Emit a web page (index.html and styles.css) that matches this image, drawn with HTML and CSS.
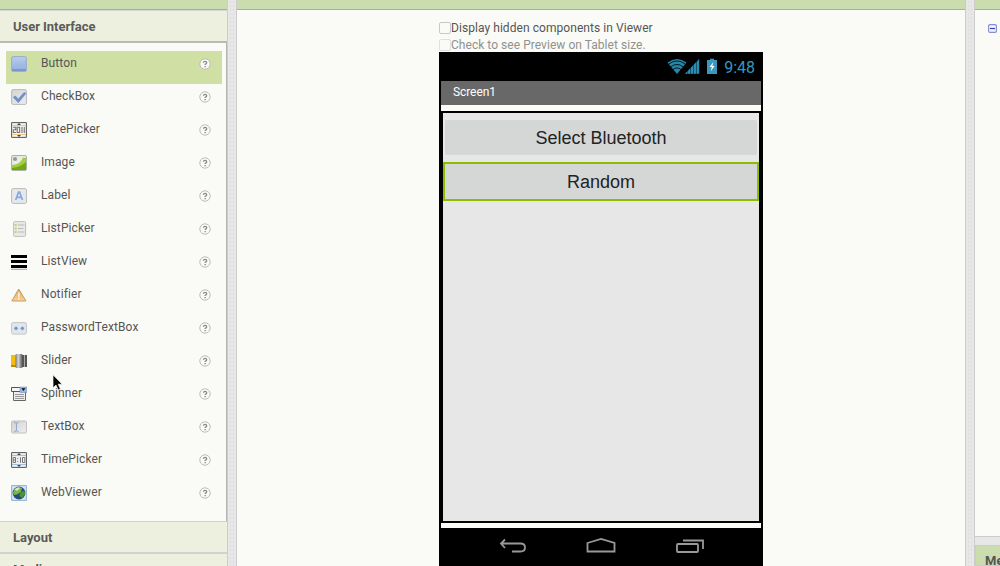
FILE: index.html
```html
<!DOCTYPE html>
<html lang="en">
<head>
<meta charset="utf-8">
<title>Designer</title>
<link rel="stylesheet" href="styles.css">
</head>
<body>
<svg class="defs" width="0" height="0" aria-hidden="true">
  <defs>
    <linearGradient id="blue" x2="0" y2="1"><stop stop-color="#b9cdec"/><stop offset="1" stop-color="#8eaddd"/></linearGradient>
    <linearGradient id="grey" x2="1" y2="1"><stop stop-color="#d3d3d3"/><stop offset="1" stop-color="#eee"/></linearGradient>
    <linearGradient id="amber" x2="0" y2="1"><stop stop-color="#e2a55c"/><stop offset="1" stop-color="#f8d394"/></linearGradient>
    <linearGradient id="metal"><stop stop-color="#777"/><stop offset=".4" stop-color="#d5d5d5"/><stop offset="1" stop-color="#555"/></linearGradient>
    <symbol id="help" viewBox="0 0 12 12"><circle cx="6" cy="6" r="5.2" fill="#fafaf7" stroke="#bcbcb9"/><path d="M4.4 4.8Q4.5 3.3 6.1 3.3T7.7 4.7Q7.7 5.6 6.2 6.4V7" fill="none" stroke="#8a8a8a" stroke-width="1.3"/><path d="M5.5 8h1.4v1.2H5.5z" fill="#8a8a8a"/></symbol>
  </defs>
</svg>
<div class="app">
  <aside class="palette">
    <div class="strip"></div>
    <h2 class="section section-open">User Interface</h2>
    <ul class="items">
      <li class="item selected"><svg class="icon" viewBox="0 0 16 16"><rect x=".6" y=".6" width="14.8" height="14.8" rx="1.5" fill="url(#blue)" stroke="#9badc9"/><path d="M1 11Q9 11 15 4v8H1z" fill="#9db9e3" opacity=".6"/><path d="M1 13h14v2H1z" fill="#7899cf"/></svg><span class="name">Button</span><svg class="help"><use href="#help"/></svg></li>
      <li class="item"><svg class="icon" viewBox="0 0 16 16"><rect x=".6" y=".6" width="14.8" height="14.8" rx="1.5" fill="url(#grey)" stroke="#b9b9b9"/><path d="M2.3 8.2L4.5 7l2.6 3.2L13 3.4l2 .9-7.7 9.4z" fill="#6d93cc" stroke="#597fb9" stroke-width=".5"/></svg><span class="name">CheckBox</span><svg class="help"><use href="#help"/></svg></li>
      <li class="item"><svg class="icon" viewBox="0 0 16 16"><path d="M.6.6h14.8v14.8H.6z" fill="#f3f1ed" stroke="#555"/><path d="M1 3.5h14M1 12.5h14" stroke="#f3c783"/><path d="M6 3l2-2 2 2zM6 13l2 2 2-2z" fill="#444"/><path d="M2 5.3h2.7v2.5H2.3v2.7H5M6.2 5.3h2.4v5.2H6.2zM11 5v6M13.3 5v6" fill="none" stroke="#777" stroke-width="1.1"/></svg><span class="name">DatePicker</span><svg class="help"><use href="#help"/></svg></li>
      <li class="item"><svg class="icon" viewBox="0 0 16 16"><rect x=".6" y=".6" width="14.8" height="14.8" rx="1" fill="#e8eee7" stroke="#a5aaa0"/><circle cx="4" cy="4" r="2.1" fill="#999"/><path d="M1 10Q10 9 12 2.5L15 3v12H1z" fill="#a4cf3c"/><path d="M1 13Q10 12 15 7v8H1z" fill="#71a617"/></svg><span class="name">Image</span><svg class="help"><use href="#help"/></svg></li>
      <li class="item"><svg class="icon" viewBox="0 0 16 16"><rect x=".6" y=".6" width="14.8" height="14.8" rx="1.5" fill="#e6e8ec" stroke="#bbb"/><path d="M4.7 12L7.6 4h1L11.5 12M5.8 9.4h4.6" fill="none" stroke="#85a8dd" stroke-width="1.7"/></svg><span class="name">Label</span><svg class="help"><use href="#help"/></svg></li>
      <li class="item"><svg class="icon" viewBox="0 0 16 16"><rect x="2.6" y=".6" width="12" height="14.8" rx="1" fill="#e9e9e5" stroke="#c0c0bb"/><path d="M7 4h6.5M7 7.5h5.5M7 11h6.5" stroke="#bbb"/><path d="M3.7 3h2v2h-2zM3.7 6.5h2v2h-2zM3.7 10h2v2h-2z" fill="#bdd666"/></svg><span class="name">ListPicker</span><svg class="help"><use href="#help"/></svg></li>
      <li class="item"><svg class="icon" viewBox="0 0 16 16"><path d="M0 1h16v3H0zM0 6h16v3H0zM0 11h16v3H0z" fill="#000"/><path d="M0 15.3h16" stroke="#777" stroke-width=".7"/></svg><span class="name">ListView</span><svg class="help"><use href="#help"/></svg></li>
      <li class="item"><svg class="icon" viewBox="0 0 16 16"><path d="M7.7 2L15 14H.8z" fill="url(#amber)" stroke="#c69c66" stroke-linejoin="round"/><path d="M7.8 5.5v5" stroke="#fff2dc" stroke-width="1.6"/><path d="M7 11.2h1.7V13H7z" fill="#fff2dc"/></svg><span class="name">Notifier</span><svg class="help"><use href="#help"/></svg></li>
      <li class="item"><svg class="icon" viewBox="0 0 16 16"><rect x=".6" y="2.6" width="14.8" height="11.5" rx="1.5" fill="#e2e6ec" stroke="#c3c5c9"/><path d="M3 8.3h4M5 6.3v4M9.4 8.3h4M11.4 6.3v4" stroke="#a8bfe0"/><circle cx="5" cy="8.3" r="1.6" fill="#7095cd"/><circle cx="11.4" cy="8.3" r="1.6" fill="#7095cd"/></svg><span class="name">PasswordTextBox</span><svg class="help"><use href="#help"/></svg></li>
      <li class="item"><svg class="icon" viewBox="0 0 16 16"><path d="M0 2h5v11H0z" fill="#f2bd0c"/><path d="M0 12h5v2H0z" fill="#bd890e"/><path d="M10 2h6v12h-6z" fill="#555"/><path d="M13 2h1v12h-1z" fill="#aaa"/><rect x="4.5" y="1" width="7" height="14" rx="1" fill="url(#metal)"/></svg><span class="name">Slider</span><svg class="help"><use href="#help"/></svg></li>
      <li class="item"><svg class="icon" viewBox="0 0 16 16"><path d="M2.5 5.5h12v9h-12z" fill="#eee" stroke="#666"/><path d="M4 8.5h9M4 10.5h9M4 12.5h9" stroke="#999"/><path d="M.5 1.5h15v4H.5z" fill="#f5f5f5" stroke="#555"/><path d="M9 1h7v5.5H9z" fill="#9ab8e7" stroke="#6886b7" stroke-width=".5"/><path d="M10.3 2.3h4.2l-2.1 2.8z" fill="#111"/></svg><span class="name">Spinner</span><svg class="help"><use href="#help"/></svg></li>
      <li class="item"><svg class="icon" viewBox="0 0 16 16"><rect x=".6" y="2" width="14.8" height="12" rx="1" fill="url(#grey)" stroke="#c0c0c0"/><path d="M3 3.7h1.5q.9 0 .9.9.1-.9 1-.9h1.3M5.4 4.3v7.2M3 12.3h1.5q.9 0 .9-.9.1.9 1 .9h1.3" fill="none" stroke="#8ba4c8"/></svg><span class="name">TextBox</span><svg class="help"><use href="#help"/></svg></li>
      <li class="item"><svg class="icon" viewBox="0 0 16 16"><path d="M.6.6h14.8v14.8H.6z" fill="#eef1f3" stroke="#555"/><path d="M1 3.5h14M1 12.5h14" stroke="#a5bfd8"/><path d="M6 3l2-2 2 2zM6 13l2 2 2-2z" fill="#444"/><path d="M2.2 5.5h2.3v5H2.2zM2.2 8h2.3M9.5 5.3v5.4M11.5 5.5h2.3v5h-2.3z" fill="none" stroke="#777"/><path d="M6.2 6h1v1h-1zM6.2 9h1v1h-1z" fill="#777"/></svg><span class="name">TimePicker</span><svg class="help"><use href="#help"/></svg></li>
      <li class="item"><svg class="icon" viewBox="0 0 16 16"><path d="M.6.6h14.8v14.8H.6z" fill="#d5e4f3" stroke="#8eb0d8"/><circle cx="8" cy="8" r="6.4" fill="#234e76"/><path d="M2 8Q3 3 7 2L11 3 10 7 6 9.5 3 10z" fill="#78b64d"/><path d="M9.5 7.5l4-2 .7 3.2-3 4.3-3-2z" fill="#4f9231"/><path d="M3.5 4.5q3-3 6-1.7L6 6z" fill="#d3e9c8"/></svg><span class="name">WebViewer</span><svg class="help"><use href="#help"/></svg></li>
    </ul>
    <h2 class="section section-closed">Layout</h2>
    <h2 class="section section-closed">Media</h2>
    <svg class="cursor" viewBox="0 0 11 17"><path d="M1 .8v13.1l3-2.8 2.2 4.8 2.2-1-2.2-4.7h4z" fill="#000" stroke="#fff" stroke-width=".7"/></svg>
  </aside>
  <div class="divider"></div>
  <main class="viewer">
    <div class="strip"></div>
    <div class="workspace">
      <label class="option"><span class="check"></span>Display hidden components in Viewer</label>
      <label class="option muted"><span class="check"></span>Check to see Preview on Tablet size.</label>
      <section class="phone">
        <div class="status">
          <svg class="signals" viewBox="0 0 52 18"><path d="M.5 4.5Q10-2.5 19.5 4.5L10 16z" fill="#2786a9"/><path d="M1.7 6.1Q10-.2 18.3 6.1M3.8 8.8Q10 4.1 16.2 8.8M6 11.5Q10 8.3 14 11.5" fill="none" stroke="#000" stroke-width=".8"/><path d="M18 15.8L32 1v14.8z" fill="#10475b"/><path d="M18 15.8l2.4-2.5v2.5zM21 12.7l2.2-2.3v5.4H21zM24 9.7l2.2-2.4v8.5H24zM27 6.6l2.2-2.4v11.6H27zM30 3.4l2.2-2.5v14.9H30z" fill="#2b8db1"/><path d="M40 2h3V.8h4V2h3v14H40z" fill="#3899bd"/><path d="M46.5 4l-4 5h2.3l-1.1 4.3 3.9-5.2h-2.3z" fill="#fff"/></svg>
          <span class="clock">9:48</span>
        </div>
        <div class="title">Screen1</div>
        <div class="screen-gap">
          <div class="screen">
            <div class="button first">Select Bluetooth</div>
            <div class="button active">Random</div>
          </div>
        </div>
        <div class="nav">
          <svg viewBox="0 0 30 18"><path d="M7 2.5L3 6.5l4 4.5M3.5 6.5H22.5q4.5 0 4.5 4t-4.5 4H14" /></svg>
          <svg viewBox="0 0 30 18"><path d="M1.5 6L15 2l13.5 4v8.5h-27z"/></svg>
          <svg viewBox="0 0 30 18"><rect x="2" y="7" width="21" height="8" rx="1"/><path d="M8 3.5H28V12"/></svg>
        </div>
      </section>
    </div>
  </main>
  <div class="divider"></div>
  <aside class="components">
    <div class="strip"></div>
    <div class="tree"><svg viewBox="0 0 9 9"><rect x=".6" y=".6" width="7.8" height="7.8" rx="1.3" fill="#f2f4ff" stroke="#8791c7" stroke-width="1.2"/><path d="M2 4.5h5" stroke="#3442c0" stroke-width="1.2"/></svg></div>
    <div class="media-header">Media</div>
  </aside>
</div>
</body>
</html>
```

FILE: styles.css
```css
* { box-sizing: border-box; }
html, body { margin: 0; height: 100%; overflow: hidden; }
body { font-family: Roboto, sans-serif; font-size: 12px; color: #555; background: #fafbf6; }
.defs { position: absolute; }
.app { display: flex; height: 566px; }
.strip { flex: none; height: 10px; background: #cbdcae; border-bottom: 1px solid #aaaea2; }

.palette { position: relative; display: flex; flex-direction: column; flex: none; width: 227px; }
.section { flex: none; margin: 0; padding-left: 13px; font-size: 13px; line-height: 30px; font-weight: 700; color: #5a5a5a; background: #edf0df; }
.section-open { height: 33px; line-height: 31px; letter-spacing: -.04px; border-top: 1px solid #d5d5d5; border-bottom: 2px solid #b9bab5; }
.items { flex: none; height: 478px; margin: 0; padding: 8px 4px 0 6px; list-style: none; border-right: 1px solid #b5b5b5; }
.item { display: flex; align-items: flex-start; height: 33px; padding: 5px 11px 0 5px; letter-spacing: .1px; }
.selected { background: #d0dfa3; }
.icon { flex: none; width: 16px; height: 16px; }
.name { flex: 1; padding-left: 14px; line-height: 15px; }
.help { flex: none; width: 12px; height: 12px; margin-top: 2px; }
.section-closed { height: 32px; line-height: 32px; border-top: 1px solid #d1d2d0; border-bottom: 1px solid #d1d2d0; }
.cursor { position: absolute; left: 52px; top: 374px; width: 11px; height: 17px; }

.divider { flex: none; width: 10px; border: 1px solid #ccc; border-width: 0 1px; background: radial-gradient(circle, #dddddf .5px, transparent .9px) 1px 0 / 3px 4px #e7e7e8; }
.viewer { flex: none; width: 728px; }
.workspace { display: flex; flex-direction: column; padding: 12px 0 0 202px; }
.option { display: flex; align-items: center; height: 12px; white-space: nowrap; letter-spacing: .06px; }
.option + .option { margin-top: 5px; letter-spacing: .04px; }
.muted { color: #91918e; }
.check { width: 12px; height: 12px; border: 1px solid #c8c8c6; border-radius: 2px; }
.muted .check { border-color: #e0e0dd; }

.phone { width: 324px; height: 514px; margin-top: 1px; padding: 0 2px; background: #000; }
.status { display: flex; align-items: center; justify-content: flex-end; height: 29px; padding-right: 6px; }
.signals { width: 52px; height: 18px; margin-right: 5px; }
.clock { padding-top: 1px; font-size: 16px; color: #309ac3; }
.title { height: 24px; padding-left: 12px; line-height: 22px; letter-spacing: -.08px; color: #fff; background: #686868; }
.screen-gap { height: 423px; padding: 6px 0 5px; background: #fafbf6; }
.screen { height: 412px; padding-top: 7px; border: 2px solid #000; background: #e7e7e7; margin: 0; }
.button { height: 35px; margin: 0 2px; font: 18px/36px "Liberation Sans", sans-serif; text-align: center; color: #202323; background: #d5d7d6; border-radius: 2px; }
.active { height: 39px; margin: 7px 0 0; border: 2px solid #8bbd00; border-radius: 0; }
.nav { display: flex; gap: 58px; padding: 9px 0 0 57px; }
.nav svg { flex: none; width: 30px; height: 18px; fill: none; stroke: #999; stroke-width: 1.8; }
.nav svg:last-child { margin-left: 1px; }

.components { display: flex; flex-direction: column; width: 25px; overflow: hidden; background: #e7e7e8; }
.tree { height: 527px; padding: 14px 0 0 13px; background: #fafbf6; border-bottom: 1px solid #ccc; }
.tree svg { display: block; width: 9px; height: 9px; }
.media-header { height: 21px; margin-top: 8px; padding-left: 9px; border: 1px solid #ccc; border-right: 0; font-size: 13px; line-height: 29px; font-weight: 700; white-space: nowrap; background: #cbdcae; }
```
